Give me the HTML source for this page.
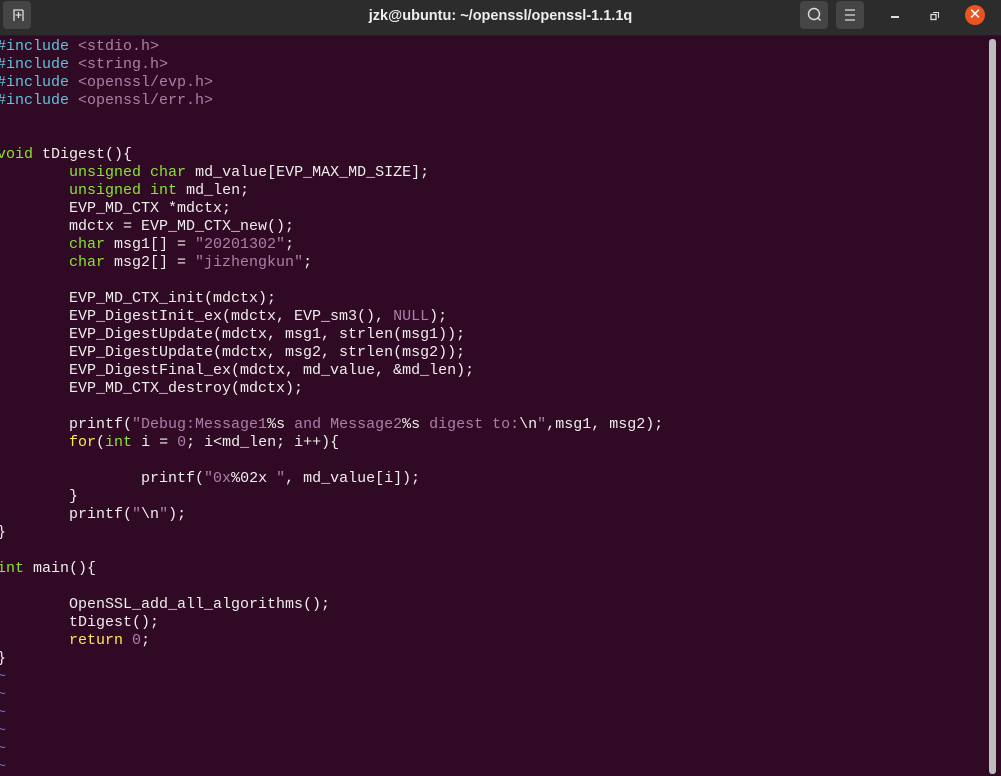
<!DOCTYPE html>
<html><head><meta charset="utf-8"><style>
body{margin:0;width:1001px;height:774px;background:#300a24;overflow:hidden;position:relative;font-family:"Liberation Sans",sans-serif}
.tb{position:absolute;left:0;top:0;width:1001px;height:35px;background:#2c2c2c;border-bottom:1px solid #1e1e1e}
.title{position:absolute;left:0;right:0;top:8px;text-align:center;color:#eee;font-weight:bold;font-size:14.5px}
.btn{position:absolute;top:1px;width:28px;height:28px;background:#454545;border-radius:4px}
pre{position:absolute;left:-3px;top:38px;margin:0;font-family:"Liberation Mono",monospace;font-size:15px;line-height:18px;color:#eeeeec}
.p{color:#5fc3d9}.s{color:#ad7fa8}.t{color:#8ae234}.k{color:#fce94f}.b{color:#6c71c4}
.sb{position:absolute;left:989px;top:39px;width:7px;height:735px;background:#bdbdbd;border-radius:3px}
</style></head><body>
<div class="tb">
<div class="btn" style="left:3px"><svg width="28" height="28"><path d="M11 20V9h9M11 9v0M15.5 11v6M12.5 14h6M20 9v11" stroke="#ddd" stroke-width="1.3" fill="none"/></svg></div>
<div class="title">jzk@ubuntu: ~/openssl/openssl-1.1.1q</div>
<div class="btn" style="left:800px"><svg width="28" height="28"><circle cx="14" cy="13" r="5.5" stroke="#ddd" stroke-width="1.4" fill="none"/><path d="M18 17l2.5 2.5" stroke="#ddd" stroke-width="1.4"/></svg></div>
<div class="btn" style="left:836px"><svg width="28" height="28"><path d="M9 9h10M9 14h10M9 19h10" stroke="#ddd" stroke-width="1.3"/></svg></div>
<div style="position:absolute;left:891px;top:16px;width:8px;height:1.5px;background:#ddd"></div>
<svg style="position:absolute;left:929px;top:10px" width="12" height="12"><path d="M4 2.5h5.5V8" stroke="#ddd" stroke-width="1.1" fill="none"/><rect x="2" y="4.5" width="5" height="5" stroke="#ddd" stroke-width="1.3" fill="none"/></svg>
<div style="position:absolute;left:965px;top:5px;width:20px;height:20px;border-radius:50%;background:#e95420;color:#fff;font-size:15px;line-height:20px;text-align:center">✕</div>
</div>
<pre><span class="p">#include</span> <span class="s">&lt;stdio.h&gt;</span>
<span class="p">#include</span> <span class="s">&lt;string.h&gt;</span>
<span class="p">#include</span> <span class="s">&lt;openssl/evp.h&gt;</span>
<span class="p">#include</span> <span class="s">&lt;openssl/err.h&gt;</span>


<span class="t">void</span> tDigest(){
        <span class="t">unsigned</span> <span class="t">char</span> md_value[EVP_MAX_MD_SIZE];
        <span class="t">unsigned</span> <span class="t">int</span> md_len;
        EVP_MD_CTX *mdctx;
        mdctx = EVP_MD_CTX_new();
        <span class="t">char</span> msg1[] = <span class="s">"20201302"</span>;
        <span class="t">char</span> msg2[] = <span class="s">"jizhengkun"</span>;

        EVP_MD_CTX_init(mdctx);
        EVP_DigestInit_ex(mdctx, EVP_sm3(), <span class="s">NULL</span>);
        EVP_DigestUpdate(mdctx, msg1, strlen(msg1));
        EVP_DigestUpdate(mdctx, msg2, strlen(msg2));
        EVP_DigestFinal_ex(mdctx, md_value, &amp;md_len);
        EVP_MD_CTX_destroy(mdctx);

        printf(<span class="s">"Debug:Message1</span>%s<span class="s"> and Message2</span>%s<span class="s"> digest to:</span>\n<span class="s">"</span>,msg1, msg2);
        <span class="k">for</span>(<span class="t">int</span> i = <span class="s">0</span>; i&lt;md_len; i++){

                printf(<span class="s">"0x</span>%02x<span class="s"> "</span>, md_value[i]);
        }
        printf(<span class="s">"</span>\n<span class="s">"</span>);
}

<span class="t">int</span> main(){

        OpenSSL_add_all_algorithms();
        tDigest();
        <span class="k">return</span> <span class="s">0</span>;
}
<span class="b">~</span>
<span class="b">~</span>
<span class="b">~</span>
<span class="b">~</span>
<span class="b">~</span>
<span class="b">~</span></pre>
<div class="sb"></div>
</body></html>
